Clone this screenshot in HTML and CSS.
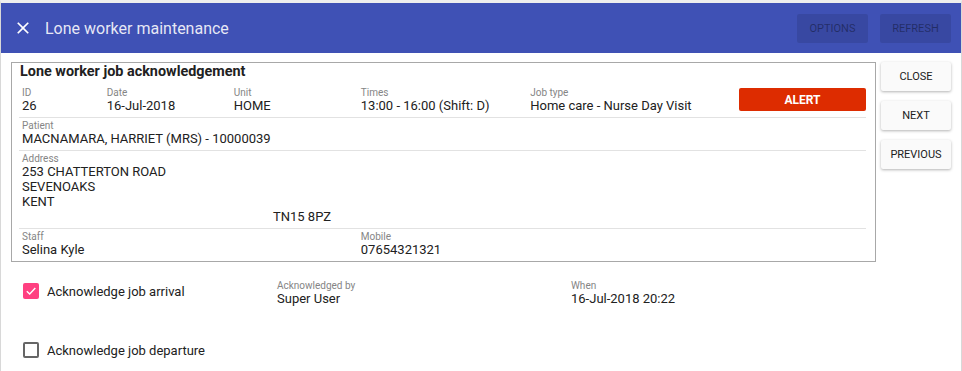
FILE: index.html
```html
<!DOCTYPE html>
<html lang="en">

<head>
    <meta charset="UTF-8">
    <meta name="viewport" content="width=device-width, initial-scale=1.0">
    <title>Lone worker maintenance</title>
    <link rel="stylesheet" href="styles.css">
</head>

<body>
    <div class="frame">
        <header class="toolbar">
            <svg class="close-icon" viewBox="0 0 24 24" width="20" height="20">
                <path d="M19 6.41L17.59 5 12 10.59 6.41 5 5 6.41 10.59 12 5 17.59 6.41 19 12 13.41 17.59 19 19 17.59 13.41 12z" fill="#fff"/>
            </svg>
            <h1>Lone worker maintenance</h1>
            <div class="toolbar-actions">
                <button class="btn-disabled">Options</button>
                <button class="btn-disabled">Refresh</button>
            </div>
        </header>

        <div class="content">
            <div class="card">
                <h2>Lone worker job acknowledgement</h2>

                <div class="row row-job">
                    <div class="field"><span class="label">ID</span><span class="value">26</span></div>
                    <div class="field"><span class="label">Date</span><span class="value">16-Jul-2018</span></div>
                    <div class="field"><span class="label">Unit</span><span class="value">HOME</span></div>
                    <div class="field"><span class="label">Times</span><span class="value">13:00 - 16:00 (Shift: D)</span></div>
                    <div class="field"><span class="label">Job type</span><span class="value">Home care - Nurse Day Visit</span></div>
                    <div class="alert-cell"><button class="btn-alert">Alert</button></div>
                </div>

                <div class="row">
                    <div class="field"><span class="label">Patient</span><span class="value">MACNAMARA, HARRIET (MRS) - 10000039</span></div>
                </div>

                <div class="row">
                    <div class="field">
                        <span class="label">Address</span>
                        <span class="value">253 CHATTERTON ROAD</span>
                        <span class="value">SEVENOAKS</span>
                        <span class="value">KENT</span>
                        <span class="value postcode">TN15 8PZ</span>
                    </div>
                </div>

                <div class="row row-staff">
                    <div class="field"><span class="label">Staff</span><span class="value">Selina Kyle</span></div>
                    <div class="field"><span class="label">Mobile</span><span class="value">07654321321</span></div>
                </div>
            </div>

            <div class="side-actions">
                <button class="btn-side">Close</button>
                <button class="btn-side">Next</button>
                <button class="btn-side">Previous</button>
            </div>
        </div>

        <div class="ack-row ack-arrival">
            <div class="ack-check">
                <span class="checkbox checked">
                    <svg viewBox="0 0 16 16" width="16" height="16">
                        <path d="M3.8 8.2l2.9 2.9 5.6-6" fill="none" stroke="#fff" stroke-width="1.4"/>
                    </svg>
                </span>
                <span class="ack-text">Acknowledge job arrival</span>
            </div>
            <div class="field"><span class="label">Acknowledged by</span><span class="value">Super User</span></div>
            <div class="field"><span class="label">When</span><span class="value">16-Jul-2018 20:22</span></div>
        </div>

        <div class="ack-row ack-departure">
            <div class="ack-check">
                <span class="checkbox"></span>
                <span class="ack-text">Acknowledge job departure</span>
            </div>
        </div>
    </div>
</body>

</html>
```

FILE: styles.css
```css
* {
    box-sizing: border-box;
}

body {
    font-family: Roboto, "Liberation Sans", Arial, sans-serif;
    color: #212121;
    margin: 0;
    background-color: #fff;
}

.frame {
    width: 962px;
    height: 100vh;
    border-top: 3px solid #eeeeee;
    border-left: 1px solid #d8d8d8;
    border-right: 1px solid #d8d8d8;
    overflow: hidden;
}

.toolbar {
    height: 50px;
    background-color: #3f51b5;
    display: flex;
    align-items: center;
    padding: 0 10px 0 12px;
}

.toolbar h1 {
    font-size: 16px;
    font-weight: 400;
    color: rgba(255, 255, 255, 0.88);
    margin: 0 0 0 12px;
    flex: 1;
}

.toolbar-actions {
    display: flex;
    gap: 12px;
}

button {
    font-family: inherit;
    text-transform: uppercase;
    border: none;
    cursor: pointer;
}

.btn-disabled {
    width: 71px;
    height: 29px;
    font-size: 11px;
    background-color: rgba(0, 0, 0, 0.1);
    color: rgba(0, 0, 0, 0.38);
    border-radius: 2px;
    padding: 0;
}

.content {
    display: flex;
    padding: 9px 10px 0 10px;
}

.card {
    flex: 1;
    border: 1px solid #a8a8a8;
    padding: 0 9px 0 7px;
}

.card h2 {
    font-size: 14.4px;
    font-weight: 700;
    line-height: 18px;
    margin: 0 0 4px 1px;
}

.row {
    display: grid;
    grid-template-columns: 1fr;
    border-bottom: 1px solid #e2e2e2;
}

.row:last-child {
    border-bottom: none;
}

.row-job {
    grid-template-columns: 2fr 3fr 3fr 4fr 5fr 3fr;
}

.row-staff {
    grid-template-columns: 8fr 12fr;
}

.field {
    display: flex;
    flex-direction: column;
    padding: 2px 3px 4px;
}

.label {
    font-size: 10px;
    line-height: 11px;
    color: #858585;
}

.value {
    font-size: 13px;
    line-height: 15px;
    color: #212121;
    white-space: nowrap;
}

.postcode {
    margin-left: 251px;
}

.alert-cell {
    padding-top: 3px;
}

.btn-alert {
    width: 100%;
    height: 23px;
    background-color: #dd2c00;
    color: #fff;
    font-size: 12px;
    font-weight: 700;
    border-radius: 2px;
    padding: 0;
}

.side-actions {
    width: 70px;
    margin-left: 5px;
    display: flex;
    flex-direction: column;
    gap: 10px;
}

.btn-side {
    height: 29px;
    font-size: 11px;
    color: #212121;
    background-color: #fafafa;
    border-radius: 2px;
    box-shadow: 0 1px 3px rgba(0, 0, 0, 0.3);
    padding: 0;
}

.ack-row {
    display: grid;
    grid-template-columns: 254px 294px 1fr;
    margin-left: 22px;
}

.ack-arrival {
    margin-top: 18px;
}

.ack-departure {
    margin-top: 33px;
}

.ack-row .field {
    padding: 0;
}

.ack-check {
    display: flex;
    align-items: center;
    height: 22px;
}

.checkbox {
    width: 16px;
    height: 16px;
    border: 2px solid #666;
    border-radius: 2px;
    display: flex;
    align-items: center;
    justify-content: center;
}

.checkbox.checked {
    border: none;
    background-color: #ff4081;
}

.ack-text {
    font-size: 13px;
    margin-left: 8px;
}
```
